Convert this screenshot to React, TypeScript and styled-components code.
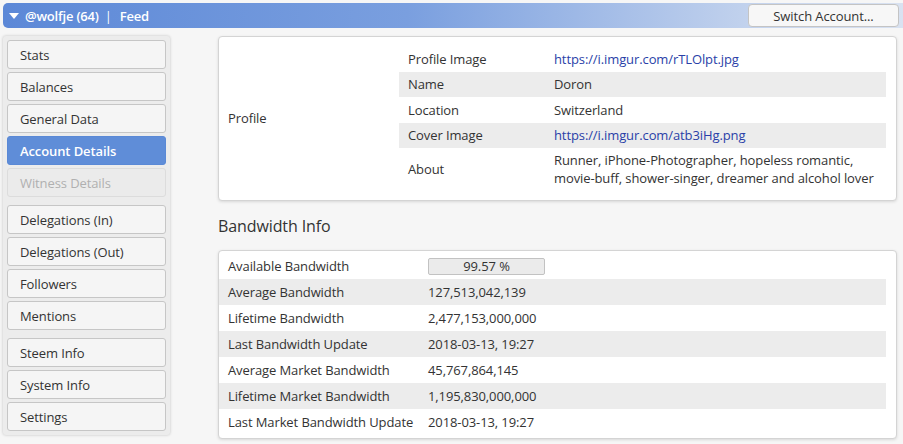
import React from 'react';
import styled, {createGlobalStyle} from 'styled-components';

const GlobalStyle = createGlobalStyle`
  html, body {
    margin: 0;
    padding: 0;
    background: #f6f6f6;
  }
  body {
    font-family: "Open Sans", "DejaVu Sans", sans-serif;
    font-size: 13px;
    letter-spacing: -0.1px;
    color: #333;
  }
`

const Page = styled.div`
  width: 903px;
  height: 444px;
  overflow: hidden;
  padding-top: 3px;
  box-sizing: border-box;
`

const Header = styled.div`
  display: flex;
  align-items: center;
  justify-content: space-between;
  height: 25px;
  margin-left: 3px;
  padding: 0 4px 0 6px;
  border-radius: 5px 0 0 5px;
  background: linear-gradient(to right, #5c88d7 0%, #7a9fdf 45%, #c6d5ee 85%, #d9e2f1 100%);
`

const Title = styled.div`
  display: flex;
  align-items: center;
  color: #fff;
  font-weight: 600;
  font-size: 13px;
  letter-spacing: -0.2px;
`

const Caret = styled.span`
  width: 0;
  height: 0;
  border-left: 5px solid transparent;
  border-right: 5px solid transparent;
  border-top: 6px solid #fff;
  margin-right: 6px;
`

const Divider = styled.span`
  margin: 0 8px 0 6px;
  font-weight: 400;
`

const SwitchButton = styled.button`
  height: 23px;
  width: 151px;
  border: 1px solid #c4c4c4;
  border-radius: 4px;
  background: #f7f7f7;
  font-family: inherit;
  font-size: 13px;
  letter-spacing: -0.1px;
  color: #333;
  padding: 0;
`

const Body = styled.div`
  display: flex;
  align-items: flex-start;
  gap: 48px;
  padding: 8px 6px 0 3px;
`

const Sidebar = styled.nav`
  width: 167px;
  box-sizing: border-box;
  padding: 4px;
  background: #ececec;
  border-radius: 3px;
  box-shadow: 0 0 3px rgba(0, 0, 0, 0.22);
  display: flex;
  flex-direction: column;
  gap: 8px;
`

const NavGroup = styled.div`
  display: flex;
  flex-direction: column;
  gap: 3px;
`

const NavButton = styled.div<{ $active?: boolean; $disabled?: boolean }>`
  height: 29px;
  box-sizing: border-box;
  display: flex;
  align-items: center;
  padding-left: 12px;
  border-radius: 3px;
  border: 1px solid ${p => p.$active ? '#5a89d6' : p.$disabled ? '#dcdcdc' : '#c6c6c6'};
  background: ${p => p.$active ? '#5f8dd8' : p.$disabled ? '#ebebeb' : '#f5f5f5'};
  color: ${p => p.$active ? '#fff' : p.$disabled ? '#b0b0b0' : '#333'};
  font-weight: ${p => p.$active ? 600 : 400};
  font-size: 13px;
`

const Main = styled.main`
  flex: 1;
  display: flex;
  flex-direction: column;
`

const Card = styled.div`
  background: #fff;
  border: 1px solid #d4d4d4;
  border-radius: 4px;
  box-shadow: 0 1px 3px rgba(0, 0, 0, 0.12);
`

const ProfileCard = styled(Card)`
  display: grid;
  grid-template-columns: 171px 1fr;
  align-items: center;
  padding: 9px 10px 10px 9px;
`

const ProfileTable = styled.div`
  display: grid;
  grid-template-columns: 146px 1fr;
`

const Cell = styled.div<{ $shade?: boolean; $tall?: boolean }>`
  background: ${p => p.$shade ? '#ececec' : 'transparent'};
  padding: ${p => p.$tall ? '3px 9px' : '0 9px'};
  min-height: 25.5px;
  display: flex;
  align-items: center;
  line-height: 18px;
  box-sizing: border-box;
`

const Link = styled.span`
  color: #2a3fa8;
`

const SectionTitle = styled.h2`
  margin: 14px 0 13px;
  font-size: 16px;
  font-weight: 400;
  color: #333;
`

const BandwidthCard = styled(Card)`
  padding: 2px 10px 3px 0;
  display: grid;
  grid-template-columns: 209px 1fr;
`

const BwCell = styled.div<{ $shade?: boolean }>`
  height: 26px;
  display: flex;
  align-items: center;
  padding-left: 9px;
  background: ${p => p.$shade ? '#ececec' : 'transparent'};
`

const BwValue = styled(BwCell)`
  padding-left: 0;
`

const Meter = styled.div`
  width: 117px;
  height: 17px;
  box-sizing: border-box;
  border: 1px solid #c2c2c2;
  border-radius: 2px;
  background: #ebebeb;
  display: flex;
  align-items: center;
  justify-content: center;
  font-size: 13px;
`

const navGroups = [
    [
        {label: 'Stats'},
        {label: 'Balances'},
        {label: 'General Data'},
        {label: 'Account Details', active: true},
        {label: 'Witness Details', disabled: true},
    ],
    [
        {label: 'Delegations (In)'},
        {label: 'Delegations (Out)'},
        {label: 'Followers'},
        {label: 'Mentions'},
    ],
    [
        {label: 'Steem Info'},
        {label: 'System Info'},
        {label: 'Settings'},
    ],
]

const bandwidth = [
    ['Average Bandwidth', '127,513,042,139'],
    ['Lifetime Bandwidth', '2,477,153,000,000'],
    ['Last Bandwidth Update', '2018-03-13, 19:27'],
    ['Average Market Bandwidth', '45,767,864,145'],
    ['Lifetime Market Bandwidth', '1,195,830,000,000'],
    ['Last Market Bandwidth Update', '2018-03-13, 19:27'],
]

const App = () => {
    return (
        <Page>
            <GlobalStyle/>
            <Header>
                <Title>
                    <Caret/>
                    @wolfje (64)
                    <Divider>|</Divider>
                    Feed
                </Title>
                <SwitchButton>Switch Account...</SwitchButton>
            </Header>
            <Body>
                <Sidebar>
                    {navGroups.map((group, i) => (
                        <NavGroup key={i}>
                            {group.map(item => (
                                <NavButton key={item.label}
                                           $active={'active' in item && item.active}
                                           $disabled={'disabled' in item && item.disabled}>
                                    {item.label}
                                </NavButton>
                            ))}
                        </NavGroup>
                    ))}
                </Sidebar>
                <Main>
                    <ProfileCard>
                        <div>Profile</div>
                        <ProfileTable>
                            <Cell>Profile Image</Cell>
                            <Cell><Link>https://i.imgur.com/rTLOlpt.jpg</Link></Cell>
                            <Cell $shade>Name</Cell>
                            <Cell $shade>Doron</Cell>
                            <Cell>Location</Cell>
                            <Cell>Switzerland</Cell>
                            <Cell $shade>Cover Image</Cell>
                            <Cell $shade><Link>https://i.imgur.com/atb3iHg.png</Link></Cell>
                            <Cell $tall>About</Cell>
                            <Cell $tall>Runner, iPhone-Photographer, hopeless romantic, movie-buff, shower-singer, dreamer and alcohol lover</Cell>
                        </ProfileTable>
                    </ProfileCard>
                    <SectionTitle>Bandwidth Info</SectionTitle>
                    <BandwidthCard>
                        <BwCell>Available Bandwidth</BwCell>
                        <BwValue><Meter>99.57 %</Meter></BwValue>
                        {bandwidth.map(([label, value], i) => (
                            <React.Fragment key={label}>
                                <BwCell $shade={i % 2 === 0}>{label}</BwCell>
                                <BwValue $shade={i % 2 === 0}>{value}</BwValue>
                            </React.Fragment>
                        ))}
                    </BandwidthCard>
                </Main>
            </Body>
        </Page>
    );
};

export default App;
